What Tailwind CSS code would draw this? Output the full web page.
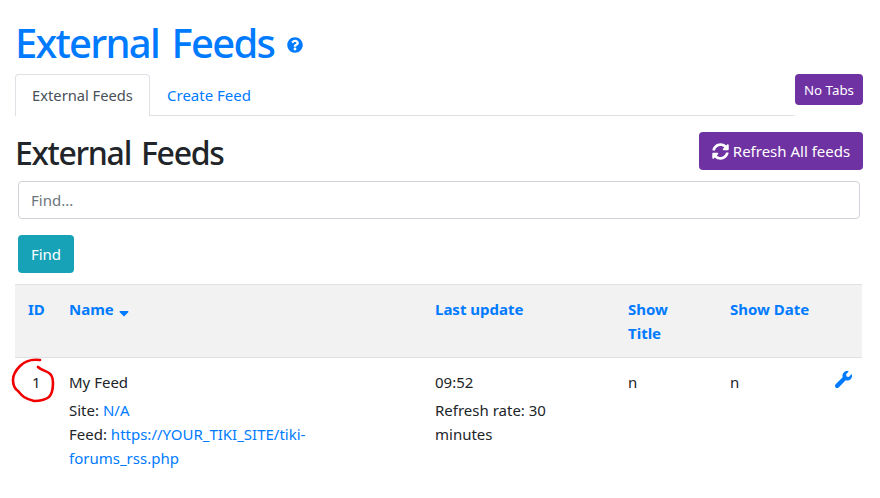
<!DOCTYPE html>
<html>
	<head>
		<meta charset="UTF-8" />
		<title>External Feeds</title>
		<script src="https://cdn.jsdelivr.net/npm/@tailwindcss/browser@4"></script>
	</head>
	<body class="bg-white text-[#212529] font-['Noto_Sans',sans-serif] text-[15px] leading-6 h-[498px] overflow-hidden">
		<div class="pl-[15px] pr-[17px] pt-[16px]">
			<h1 class="flex items-center h-[52px] pt-px text-[40px] leading-[52px] tracking-[-1.75px] [word-spacing:4px] text-[#007bff] font-medium">
				External Feeds
				<svg class="ml-[13px] mt-[5px] w-4 h-4" viewBox="0 0 512 512" fill="currentColor"><path d="M504 256c0 136.997-111.043 248-248 248S8 392.997 8 256C8 119.083 119.043 8 256 8s248 111.083 248 248zM262.655 90c-54.497 0-89.255 22.957-116.549 63.758-3.536 5.286-2.353 12.415 2.715 16.258l34.699 26.31c5.205 3.947 12.621 3.008 16.665-2.122 17.864-22.658 30.113-35.797 57.303-35.797 20.429 0 45.698 13.148 45.698 32.958 0 14.976-12.363 22.667-32.534 33.976C247.128 238.528 216 254.941 216 296v4c0 6.627 5.373 12 12 12h56c6.627 0 12-5.373 12-12v-1.333c0-28.462 83.186-29.647 83.186-106.667 0-58.002-60.165-102-116.531-102zM256 338c-25.365 0-46 20.635-46 46 0 25.364 20.635 46 46 46s46-20.636 46-46c0-25.365-20.635-46-46-46z"/></svg>
			</h1>

			<!-- tabs -->
			<div class="flex items-start mt-[6px]">
				<ul class="flex flex-1 h-[42px] border-b border-[#dee2e6]">
					<li class="w-[135px] h-[42px] pb-px flex items-center justify-center bg-white border border-b-0 border-[#dee2e6] rounded-t text-[#495057] text-[14.7px]">External Feeds</li>
					<li class="w-[118px] h-[41px] flex items-center justify-center text-[#007bff]">Create Feed</li>
				</ul>
				<button class="w-[68px] h-[31px] bg-[#6f32a3] text-white text-[13.3px] rounded">No Tabs</button>
			</div>

			<div class="flex items-center justify-between mt-4 h-[38px]">
				<h2 class="pt-[3px] text-[32px] leading-[38px] tracking-[-1.3px] [word-spacing:3px] font-medium">External Feeds</h2>
				<button class="flex items-center justify-center gap-1 w-[164px] h-[38px] bg-[#6f32a3] text-white rounded">
					<svg class="w-[17px] h-[17px]" viewBox="0 0 512 512" fill="currentColor"><path d="M370.72 133.28C339.458 104.008 298.888 87.962 255.848 88c-77.458.068-144.328 53.178-162.791 126.85-1.344 5.363-6.122 9.15-11.651 9.15H24.103c-7.498 0-13.194-6.807-11.807-14.176C33.933 94.924 134.813 8 256 8c66.448 0 126.791 26.136 171.315 68.685L463.03 40.97C478.149 25.851 504 36.559 504 57.941V192c0 13.255-10.745 24-24 24H345.941c-21.382 0-32.09-25.851-16.971-40.971l41.75-41.749zM32 296h134.059c21.382 0 32.09 25.851 16.971 40.971l-41.75 41.75c31.262 29.273 71.835 45.319 114.876 45.28 77.418-.07 144.315-53.144 162.787-126.849 1.344-5.363 6.122-9.15 11.651-9.15h57.304c7.498 0 13.194 6.807 11.807 14.176C478.067 417.076 377.187 504 256 504c-66.448 0-126.791-26.136-171.315-68.685L48.97 471.03C33.851 486.149 8 475.441 8 454.059V320c0-13.255 10.745-24 24-24z"/></svg>
					Refresh All feeds
				</button>
			</div>

			<!-- search -->
			<div class="px-[3px] mt-[11px]">
				<input class="block w-full h-[38px] px-3 border border-[#ced4da] rounded bg-white placeholder:text-[#6c757d]" type="text" placeholder="Find..." />
				<button class="block mt-4 w-[56px] h-[38px] bg-[#17a2b8] text-white rounded">Find</button>
			</div>

			<!-- table -->
			<table class="relative mt-[11px] w-[847px] table-fixed border-collapse text-left">
				<thead>
					<tr class="bg-[#f2f2f2] border-y border-[#dee2e6] text-[#007bff] align-top">
						<th class="w-[42px] p-3 pl-[13px] pr-0 font-bold">ID</th>
						<th class="w-[366px] p-3 font-bold">
							<span class="flex items-center gap-[5px]">Name
								<svg class="w-[10px] h-[12px] mt-[3px]" viewBox="0 130 320 320" fill="currentColor"><path d="M41 288h238c21.4 0 32.1 25.9 17 41L177 448c-9.4 9.4-24.6 9.4-33.9 0L24 329c-15.1-15.1-4.4-41 17-41z"/></svg>
							</span>
						</th>
						<th class="w-[193px] p-3 font-bold">Last update</th>
						<th class="w-[102px] p-3 font-bold">Show<br />Title</th>
						<th class="w-[108px] p-3 font-bold whitespace-nowrap">Show Date</th>
						<th class="p-3"></th>
					</tr>
				</thead>
				<tbody>
					<tr class="align-top">
						<td class="p-3 pl-[17px] pr-0">1</td>
						<td class="p-3">
							<div class="mb-1">My Feed</div>
							<div>Site: <a class="text-[#007bff]" href="#">N/A</a></div>
							<div>Feed: <a class="text-[#007bff]" href="#">https://YOUR_TIKI_SITE/tiki-<br />forums_rss.php</a></div>
						</td>
						<td class="p-3">
							<div class="mb-1">09:52</div>
							<div>Refresh rate: 30 minutes</div>
						</td>
						<td class="p-3">n</td>
						<td class="p-3">n</td>
						<td class="p-0 pt-[12px]">
							<svg class="w-[17px] h-[17px] mt-px ml-[9px] text-[#007bff]" viewBox="0 0 512 512" fill="currentColor"><path d="M507.73 109.1c-2.24-9.03-13.54-12.09-20.12-5.51l-74.36 74.36-67.88-11.31-11.31-67.88 74.36-74.36c6.62-6.62 3.43-17.9-5.66-20.16-47.38-11.74-99.55.91-136.58 37.93-39.64 39.64-50.55 97.1-34.05 147.2L18.74 402.76c-24.99 24.99-24.99 65.51 0 90.5 24.99 24.99 65.51 24.99 90.5 0l213.21-213.21c50.12 16.71 107.47 5.68 147.37-34.22 37.07-37.07 49.7-89.32 37.91-136.73z"/></svg>
						</td>
					</tr>
				</tbody>
			</table>
		</div>

		<!-- red hand drawn circle around the id -->
		<svg class="absolute left-[10px] top-[358px] w-[46px] h-[46px] text-[#f00000]" viewBox="0 0 46 46" fill="none" stroke="currentColor" stroke-width="2.6" stroke-linecap="round" stroke-linejoin="round">
			<path d="M30 2C23 1 15 3 10 8 6 12 3 17 3 22c0 5 2 9 5 11 2 2 3 4 6 6 3 2 6 3 10 4 5 0 11-1 15-4 3-3 4-8 4-14 0-5-1-8-4-10-3-2-8-3-11-6"/>
		</svg>
	</body>
</html>
